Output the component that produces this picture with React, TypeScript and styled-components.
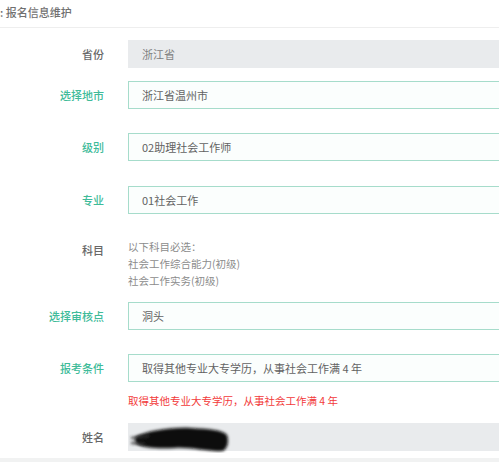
import React from 'react'
import styled, { createGlobalStyle } from 'styled-components'

const GlobalStyle = createGlobalStyle`
  body {
    margin: 0;
    background: #fff;
    font-family: "Noto Sans CJK SC", "Noto Sans", sans-serif;
    overflow: hidden;
  }
`

const Page = styled.div`
  width: 499px;
  height: 462px;
  display: flex;
  flex-direction: column;
  overflow: hidden;
`

const Header = styled.div`
  height: 28px;
  box-sizing: border-box;
  padding: 3px 0 0 0;
  font-size: 11px;
  line-height: 18px;
  font-weight: 500;
  color: #707070;
  border-bottom: 1px solid #eeeeee;
`

const Form = styled.div`
  flex: 1;
  padding-top: 12px;
  border-bottom: 4px solid #f1f2f2;
`

const Row = styled.div<{ $gap: number; $top?: boolean }>`
  display: flex;
  align-items: ${p => (p.$top ? 'flex-start' : 'center')};
  margin-bottom: ${p => p.$gap}px;
`

const Label = styled.div<{ $active?: boolean; $top?: boolean }>`
  width: 104px;
  padding-right: 24px;
  flex-shrink: 0;
  text-align: right;
  font-size: 11px;
  font-weight: 500;
  color: ${p => (p.$active ? '#40bb99' : '#676767')};
  padding-top: ${p => (p.$top ? '4px' : '0')};
`

const Field = styled.div<{ $disabled?: boolean }>`
  flex: 1;
  height: 28px;
  box-sizing: border-box;
  display: flex;
  align-items: center;
  padding-left: 13px;
  font-size: 11px;
  color: ${p => (p.$disabled ? '#808080' : '#626262')};
  background: ${p => (p.$disabled ? '#e9ebed' : '#fbfefd')};
  border: 1px solid ${p => (p.$disabled ? '#e9ebed' : '#a6dccb')};
  border-right: none;
  position: relative;
`

const Subjects = styled.div`
  font-size: 10.5px;
  line-height: 17px;
  color: #8c8c8c;
`

const ErrorText = styled.div`
  margin: 0 0 14px 128px;
  font-size: 10.5px;
  line-height: 16px;
  color: #f23a3a;
`

const Scribble = styled.svg`
  position: absolute;
  left: 0;
  top: 1px;
`

function Redacted() {
  return (
    <Scribble width="104" height="28" viewBox="0 0 104 28">
      <defs>
        <filter id="blur" x="-10%" y="-30%" width="120%" height="160%">
          <feGaussianBlur stdDeviation="1.6" />
        </filter>
      </defs>
      <path
        d="M8 11 C20 6 40 2 62 3 C80 4 94 5 98 10 C100 16 99 23 94 26 C80 27 62 22 46 23 C30 24 14 23 8 19 C5 16 5 13 8 11 Z"
        fill="#0b0b0b"
        filter="url(#blur)"
      />
      <path d="M2 13 L20 11 M2 18 L16 19" stroke="#333" strokeWidth="2" filter="url(#blur)" />
    </Scribble>
  )
}

export default function App() {
  return (
    <Page>
      <GlobalStyle />
      <Header>: 报名信息维护</Header>
      <Form>
        <Row $gap={13}>
          <Label>省份</Label>
          <Field $disabled>浙江省</Field>
        </Row>
        <Row $gap={24}>
          <Label $active>选择地市</Label>
          <Field>浙江省温州市</Field>
        </Row>
        <Row $gap={25}>
          <Label $active>级别</Label>
          <Field>02助理社会工作师</Field>
        </Row>
        <Row $gap={24}>
          <Label $active>专业</Label>
          <Field>01社会工作</Field>
        </Row>
        <Row $gap={13} $top>
          <Label $top>科目</Label>
          <Subjects>
            以下科目必选：
            <br />
            社会工作综合能力(初级)
            <br />
            社会工作实务(初级)
          </Subjects>
        </Row>
        <Row $gap={24}>
          <Label $active>选择审核点</Label>
          <Field>洞头</Field>
        </Row>
        <Row $gap={11}>
          <Label $active>报考条件</Label>
          <Field>取得其他专业大专学历，从事社会工作满 4 年</Field>
        </Row>
        <ErrorText>取得其他专业大专学历，从事社会工作满 4 年</ErrorText>
        <Row $gap={0}>
          <Label>姓名</Label>
          <Field $disabled>
            <Redacted />
          </Field>
        </Row>
      </Form>
    </Page>
  )
}
